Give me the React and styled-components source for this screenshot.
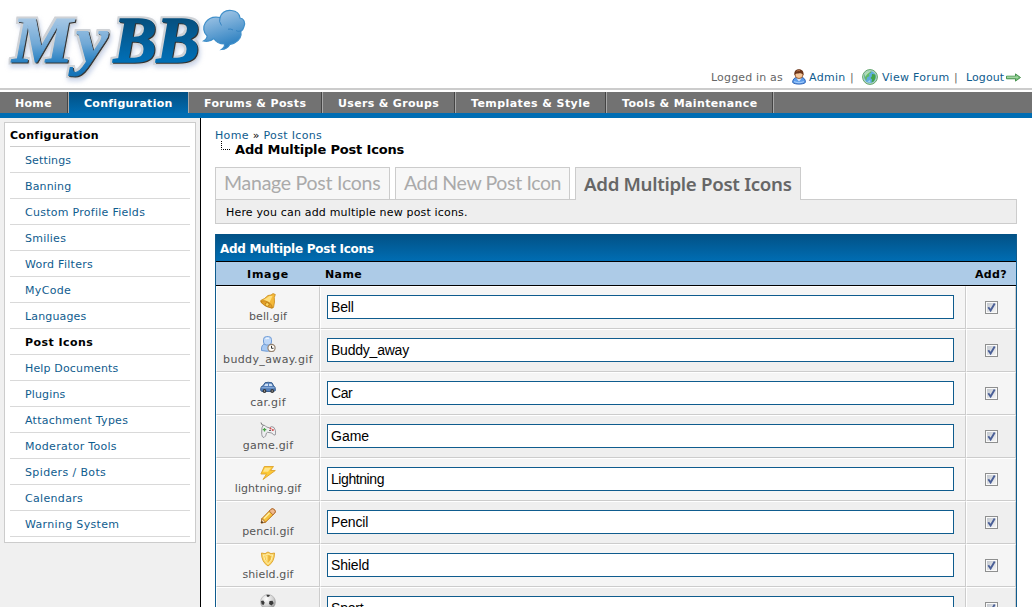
import React from "react";
import styled, { createGlobalStyle, css } from "styled-components";

const Global = createGlobalStyle`
  * { box-sizing: border-box; }
  html, body { margin: 0; padding: 0; background: #fff; overflow: hidden; }
  body { font: 11px/14px Verdana, "DejaVu Sans", sans-serif; color: #000; }
  ul { list-style: none; margin: 0; padding: 0; }
  a { color: #0f5c8e; text-decoration: none; }
`;

const Page = styled.div`
  height: 607px;
  display: flex;
  flex-direction: column;
  overflow: hidden;
`;

const Header = styled.header`
  height: 92px;
  flex: none;
  display: flex;
  justify-content: space-between;
  align-items: flex-end;
  padding: 0 11px 0 0;
  background: linear-gradient(#fff 88px, #ccc 88px, #ccc 90px, #fff 90px);
`;

const LogoArt = styled.svg`
  display: block;
  width: 260px;
  height: 88px;
  align-self: flex-start;
`;

const Welcome = styled.div`
  display: flex;
  align-items: center;
  height: 16px;
  margin-bottom: 7px;
  color: #666;
  white-space: pre;
`;

const WelcomeItem = styled.span`
  display: flex;
  align-items: center;
  line-height: 15px;
  padding-top: ${(p) => (p.$icon ? 0 : 1)}px;
  width: ${(p) => p.$w}px;
  letter-spacing: ${(p) => p.$ls || 0}px;
  gap: ${(p) => p.$gap || 0}px;
  svg { flex: none; }
  a { padding-top: 1px; }
`;

const Nav = styled.nav`
  display: flex;
  height: 26px;
  flex: none;
  background: linear-gradient(#727272 21px, #006db3 21px);
`;

const NavItem = styled.a`
  width: ${(p) => p.$w}px;
  height: 21px;
  line-height: 23px;
  padding-left: 15px;
  border-left: 1px solid #a8a8a8;
  border-right: 1px solid #444;
  color: #fff;
  font-weight: bold;
  white-space: nowrap;
  letter-spacing: ${(p) => p.$ls || 0}px;
  ${(p) => p.$first && css`border-left: 0;`}
  ${(p) => p.$active && css`
    border-right: 0;
    background: linear-gradient(#025083, #006bb0);
  `}
`;

const NavEnd = styled.span`
  width: 1px;
  height: 21px;
  background: #a8a8a8;
`;

const Body = styled.div`
  display: flex;
  flex: 1;
  min-height: 0;
`;

const Sidebar = styled.aside`
  width: 201px;
  flex: none;
  padding: 4px;
  background: #f0f0f0;
  border-right: 1px solid #000;
`;

const Menu = styled.div`
  background: #fff;
  border: 1px solid #ccc;
  padding: 0 5px 5px;
`;

const MenuTitle = styled.div`
  height: 24px;
  line-height: 25px;
  font-weight: bold;
  border-bottom: 1px solid #ccc;
  letter-spacing: 0.3px;
`;

const MenuItem = styled.li`
  height: 26px;
  line-height: 27px;
  padding-left: 15px;
  border-bottom: 1px solid #d9d9d9;
  color: ${(p) => (p.$active ? "#000" : "#0f5c8e")};
  font-weight: ${(p) => (p.$active ? "bold" : "normal")};
  letter-spacing: ${(p) => p.$ls || 0}px;
`;

const Content = styled.main`
  flex: 1;
  min-width: 0;
  padding: 11px 15px 0 14px;
`;

const Crumbs = styled.div`
  height: 14px;
  white-space: pre;
  letter-spacing: 0.33px;
`;

const CrumbTitle = styled.div`
  display: flex;
  gap: 5px;
  height: 14px;
  padding-left: 6px;
  font-size: 13px;
  line-height: 14px;
  font-weight: bold;
  letter-spacing: -0.17px;
`;

const CrumbBend = styled.svg`
  width: 9px;
  height: 9px;
  margin-top: -2px;
  flex: none;
  display: block;
`;

const Tabs = styled.div`
  display: flex;
  gap: 5px;
  margin-top: 10px;
`;

const Tab = styled.a`
  width: ${(p) => p.$w}px;
  height: ${(p) => (p.$active ? 33 : 32)}px;
  margin-bottom: ${(p) => (p.$active ? -1 : 0)}px;
  z-index: 1;
  padding-left: 8px;
  border: 1px solid #ccc;
  border-bottom: 0;
  background: ${(p) => (p.$active ? "#eee" : "#f7f7f7")};
  color: ${(p) => (p.$active ? "#666" : "#aaa")};
  font: ${(p) => (p.$active ? '600 18.7px/31px "Noto Sans"' : '400 19.5px/30px Lato')}, sans-serif;
  letter-spacing: ${(p) => p.$ls || 0}px;
  white-space: nowrap;
`;

const Intro = styled.div`
  height: 25px;
  line-height: 25px;
  padding-left: 10px;
  border: 1px solid #ccc;
  background: #eee;
  letter-spacing: 0.17px;
`;

const Panel = styled.section`
  margin-top: 10px;
  border: 1px solid #0f5c8e;
  height: 500px;
`;

const PanelTitle = styled.h2`
  margin: -1px 0 0;
  height: 28px;
  line-height: 30px;
  padding-left: 4px;
  font-size: 12px;
  color: #fff;
  background: linear-gradient(#025185, #006db3);
  border-bottom: 1px solid #000;
  letter-spacing: -0.26px;
`;

const grid = css`
  display: grid;
  grid-template-columns: 104px 646px 50px;
`;

const HeadRow = styled.div`
  ${grid}
  height: 24px;
  line-height: 25px;
  background: #adcbe7;
  border-bottom: 1px solid #000;
  font-weight: bold;
`;

const HeadCell = styled.span`
  text-align: ${(p) => (p.$left ? "left" : "center")};
  padding-left: ${(p) => (p.$left ? 5 : 0)}px;
  letter-spacing: ${(p) => p.$ls || 0}px;
`;

const Row = styled.div`
  ${grid}
  height: 43px;
  background: ${(p) => (p.$alt ? "#efefef" : "#f5f5f5")};
`;

const Cell = styled.div`
  display: flex;
  flex-direction: column;
  align-items: center;
  border: 1px solid;
  border-color: #fff #ccc #ccc #fff;
  padding: ${(p) => p.$pad || "0"};
  color: #555;
  svg { display: block; flex: none; }
`;

const FileName = styled.span`
  line-height: 15px;
  letter-spacing: ${(p) => p.$ls || 0}px;
`;

const Field = styled.input`
  width: 627px;
  height: 24px;
  padding: 1px 3px;
  margin-right: 5px;
  border: 1px solid #0f5c8e;
  border-radius: 0;
  background: #fff;
  color: #000;
  font: 14px "Liberation Sans", Arial, sans-serif;
  letter-spacing: ${(p) => p.$ls || 0}px;
  outline: none;
`;

/* ---------- drawings ---------- */

const Logo = () => (
  <LogoArt viewBox="0 0 260 88" role="img" aria-label="MyBB">
    <defs>
      <linearGradient id="lt" gradientUnits="userSpaceOnUse" x1="0" y1="17" x2="0" y2="76">
        <stop offset="0" stopColor="#a9c9e6" />
        <stop offset="0.45" stopColor="#72a9d6" />
        <stop offset="0.8" stopColor="#1f7cc0" />
        <stop offset="1" stopColor="#1472b6" />
      </linearGradient>
      <linearGradient id="dk" gradientUnits="userSpaceOnUse" x1="0" y1="19" x2="0" y2="63">
        <stop offset="0" stopColor="#06507f" />
        <stop offset="1" stopColor="#0070b8" />
      </linearGradient>
      <linearGradient id="bub" gradientUnits="userSpaceOnUse" x1="215" y1="10" x2="228" y2="50">
        <stop offset="0" stopColor="#a9cae8" />
        <stop offset="1" stopColor="#2079bd" />
      </linearGradient>
      <filter id="bevel" filterUnits="userSpaceOnUse" x="0" y="5" width="215" height="83" colorInterpolationFilters="sRGB">
        <feMorphology in="SourceAlpha" operator="dilate" radius="1.6" result="fat" />
        <feGaussianBlur in="fat" stdDeviation="0.6" result="fatSoft" />
        <feFlood floodColor="#cfd2d6" />
        <feComposite in2="fatSoft" operator="in" result="rim" />
        <feGaussianBlur in="fat" stdDeviation="2" />
        <feOffset dx="1" dy="3" result="far" />
        <feFlood floodColor="#9fb2d8" floodOpacity="0.5" />
        <feComposite in2="far" operator="in" result="glow" />
        <feGaussianBlur in="SourceAlpha" stdDeviation="0.4" />
        <feOffset dx="1" dy="1.2" result="near" />
        <feFlood floodColor="#333" />
        <feComposite in2="near" operator="in" result="edge" />
        <feMerge>
          <feMergeNode in="glow" />
          <feMergeNode in="rim" />
          <feMergeNode in="edge" />
          <feMergeNode in="SourceGraphic" />
        </feMerge>
      </filter>
    </defs>
    <g fontFamily='"Liberation Serif", serif' fontStyle="italic" fontWeight="bold" fontSize="66" filter="url(#bevel)">
      <text x="12" y="62" fill="url(#lt)" stroke="url(#lt)" strokeWidth="1" textLength="61" lengthAdjust="spacingAndGlyphs">M</text>
      <text x="76" y="62" fill="url(#lt)" stroke="url(#lt)" strokeWidth="1" textLength="32" lengthAdjust="spacingAndGlyphs">y</text>
      <text x="113.500" y="62" fill="url(#dk)" stroke="url(#dk)" strokeWidth="1.600" textLength="86" lengthAdjust="spacingAndGlyphs">BB</text>
    </g>
    <path
      d="M220 17.500C222 11.500 227 10 231.500 10.500C236.500 11 239.500 13.500 240 18C244 18.500 245.500 22.500 244 26.500C243.400 29 242 30.500 240.800 31.500C242 36 239.500 40.500 234.500 43C232 44.200 230.500 44 229.800 44.500C228.500 47 226.500 49.300 221.500 49.500C224.500 47.500 224.800 46 224.500 44C219 44 215.500 41.500 214 38.500C211.500 40.700 208 42 203.500 41C206.500 39 207.300 37.500 207 35.800C203.500 32.500 202.500 27 205.500 22.500C208.500 18 214.500 16.500 220 17.500Z"
      fill="url(#bub)" stroke="#3f8fca" strokeWidth="1.200"
    />
    <path d="M220 17.500Q218.500 21.500 221.500 25.500M228 29.200Q231 28.500 233 30M241 31Q237.500 32 236 30.500" fill="none" stroke="#3684c2" strokeWidth="1" />
  </LogoArt>
);

const UserIcon = () => (
  <svg width="14" height="16" viewBox="0 0 14 16">
    <path d="M.700 13.500C.300 10.500 3 8.500 4.500 8.300H9.500C11.500 8.500 13.900 10.500 13.300 13.500C11 15.600 3 15.600 .700 13.500Z" fill="#5b9bea" stroke="#2d62b5" />
    <path d="M4.500 9.500L7 12.500L9.500 9.500Z" fill="#d5e7fb" />
    <path d="M2 12.500Q7 14.800 12 12.500" stroke="#9cc8fb" strokeWidth="1.200" fill="none" />
    <circle cx="7" cy="5.500" r="4" fill="#f6c79b" stroke="#a0643b" />
    <path d="M2.600 6.500C1.500 1.800 4.500 .300 7 .300C10 .300 12.200 2.500 11.400 6.500C10.600 4.500 8.500 4.200 6.500 4.400C4.500 4.400 3.200 4.600 2.600 6.500Z" fill="#6b3419" />
    <path d="M4.500 2.200Q6 1.200 8 1.700" stroke="#b9744b" fill="none" />
  </svg>
);

const GlobeIcon = () => (
  <svg width="16" height="16" viewBox="0 0 16 16">
    <circle cx="8" cy="8" r="7.400" fill="#b7d6c4" stroke="#5fa56b" strokeWidth="1" />
    <circle cx="8" cy="8" r="5.900" fill="#5fabdf" />
    <path d="M2.500 6Q4 2 8.500 2L9.500 3.500L7 5L7.500 7L5 8.500L4.500 11.500Q2 9.500 2.500 6Z" fill="#62bb66" />
    <path d="M10 5L13.300 5.500Q14.300 9.500 11.500 12.500L9.500 13.500L10 10.500L8.500 9L9.800 7.500Z" fill="#43a648" />
    <path d="M3 4.500Q5.500 1.600 9 2.200Q6 4 3 8Z" fill="#fff" opacity=".5" />
    <path d="M5.500 12.500L8 11L8.500 13.800Z" fill="#9cd3f1" />
  </svg>
);

const ArrowIcon = () => (
  <svg width="15" height="9" viewBox="0 0 15 9">
    <path d="M.500 3.200H9.500V.900L14.500 4.500L9.500 8.100V5.800H.500Z" fill="#79c17c" stroke="#3d8b45" strokeWidth=".9" />
    <path d="M1 4.200H12" stroke="#b6e0b4" />
  </svg>
);

const icons = {
  bell: (
    <>
      <path d="M13 .600L15.300 1.500L14.300 4.500L14.500 9L13.500 14.500L11.500 15.200L1 9.500L.700 7.500L4.500 5.500L8 2.500L11 2Z" fill="#f4b93a" stroke="#c98a1c" strokeWidth=".8" />
      <path d="M3.500 7L9.500 3L12.500 3L9.500 9.500Z" fill="#ffdf7d" />
      <path d="M1 8Q5 6.800 9 9.500Q12.500 12 12.500 15Q8 14.800 4.500 12.500Q1 10 1 8Z" fill="#e3a029" stroke="#b67510" strokeWidth=".6" />
      <circle cx="7.200" cy="11.500" r="1.900" fill="#ffd75f" stroke="#a96a0a" strokeWidth=".7" />
    </>
  ),
  buddy: (
    <>
      <path d="M1.500 14.500Q1 8.500 5 8H10Q13.500 8.500 13 14.500Q7 16 1.500 14.500Z" fill="#a6c8f2" stroke="#6f9bd5" />
      <rect x="3.500" y=".600" width="8" height="8.400" rx="3" fill="#bcd6f7" stroke="#6f9bd5" />
      <path d="M5.500 3Q7 1.700 9 2.500" stroke="#e9f3ff" strokeWidth="1.500" fill="none" />
      <circle cx="11.500" cy="12" r="3.600" fill="#fffdf8" stroke="#93816f" strokeWidth="1.200" />
      <path d="M11.500 9.800V12.300H13.500" fill="none" stroke="#333" />
    </>
  ),
  car: (
    <>
      <path d="M.700 9.500Q1 7 3 6.800L5 3.700Q8 2.800 12 3.800L13.700 7Q15.600 7.500 15.400 11.500L13.500 12.500H2L.700 11.500Z" fill="#5680bb" stroke="#2f5688" strokeWidth=".9" />
      <path d="M4 7L5.500 4.700H8V7ZM9 4.700H11.500L12.500 7H9Z" fill="#cfe0f3" />
      <path d="M1.500 8.700H14.500" stroke="#8fb2dd" />
      <circle cx="4.500" cy="12" r="1.900" fill="#333" /><circle cx="12.200" cy="12" r="1.900" fill="#333" />
      <circle cx="4.500" cy="12" r=".7" fill="#bbb" /><circle cx="12.200" cy="12" r=".7" fill="#bbb" />
    </>
  ),
  game: (
    <>
      <path d="M1 .500Q1 3 4 3.500" stroke="#777" fill="none" />
      <path d="M3 3.500Q5 2.500 6.500 5L9.500 5.800Q11.500 3.500 14 5.500Q16 8 15.700 12.500Q14 14.500 11.800 11L9 10.500Q7 10 6.500 11Q6 14.500 4 15.500Q1.500 15.500 1.700 10Q1.500 5 3 3.500Z" fill="#eeeef0" stroke="#8d8d93" strokeWidth=".9" />
      <path d="M2.700 7.700H6.300M4.500 6V9.500" stroke="#47a447" strokeWidth="1.300" />
      <circle cx="10.500" cy="6.500" r="1" fill="#d84a4a" /><circle cx="12.800" cy="8" r="1.100" fill="#d84a4a" />
      <path d="M9 8.500H11" stroke="#666" />
    </>
  ),
  lightning: (
    <>
      <path d="M4.300 1.500H13.500L10.500 5.500H15.300L3 14.500L6.500 9H.900Z" fill="#fcc936" stroke="#dfa32b" strokeWidth=".9" strokeLinejoin="round" />
      <path d="M5 2.700H11L8 6.800H3Z" fill="#ffe48a" />
    </>
  ),
  pencil: (
    <>
      <path d="M11 1.300Q12.500 0 14.500 1.700Q16 3.500 14.800 5L5.500 14.200L1.200 15L2 10.500Z" fill="#f7c33c" stroke="#b96f17" strokeLinejoin="round" />
      <path d="M11 1.300Q12.500 0 14.500 1.700Q16 3.500 14.800 5L12.800 6.800L9.300 3Z" fill="#efb98f" stroke="#a8612c" strokeWidth=".8" />
      <path d="M2 10.500L5.500 14.200L1.200 15Z" fill="#fae0ba" stroke="#a5651c" strokeWidth=".8" />
      <path d="M4 10.500L9.500 5" stroke="#fff0a5" strokeWidth="1.600" /><circle cx="2" cy="14.200" r=".9" fill="#432" />
    </>
  ),
  shield: (
    <>
      <path d="M1.500 2L5 2.700L8 1L11 2.700L14.500 2Q14.500 11 8 15Q1.500 11 1.500 2Z" fill="#fbd768" stroke="#dfa530" strokeLinejoin="round" />
      <path d="M3.500 4L5.500 4.200L8 3L10.500 4.200L12.500 4Q12.200 9.500 8 12.800Q3.800 9.500 3.500 4Z" fill="#f5c340" stroke="#fff0b0" />
      <path d="M5.200 5L7.500 4.200V11Q5.500 9 5.200 5Z" fill="#ffe48b" />
      <path d="M8.500 4.200L10.800 5.200Q10.500 9 8.500 11Z" fill="#e9b13a" />
    </>
  ),
  sport: (
    <>
      <defs>
        <radialGradient id="ball" cx=".4" cy=".3" r=".75">
          <stop offset="0" stopColor="#fff" /><stop offset=".6" stopColor="#cfcfcf" /><stop offset="1" stopColor="#888" />
        </radialGradient>
      </defs>
      <circle cx="8" cy="8" r="7.500" fill="url(#ball)" stroke="#aaa" strokeWidth=".6" />
      <path d="M6.500 .800L10 1L9 2.800L7 2.700ZM1 7L3.300 6.500L4.700 8.700L3.500 11L1.600 10.300ZM9.500 7L12.500 6.700L13.700 9.200L11.500 11.500L9 10ZM6 13.500L8.500 13L9.500 15H6.500Z" fill="#3a3a3a" />
    </>
  ),
};

const Glyph = ({ name }) => (
  <svg width="16" height="16" viewBox="0 0 16 16">{icons[name]}</svg>
);

const Check = () => (
  <svg width="13" height="13" viewBox="0 0 13 13" role="checkbox" aria-checked="true">
    <defs>
      <linearGradient id="chk" x1="0" y1="0" x2="1" y2="1">
        <stop offset="0" stopColor="#c2c7ce" /><stop offset="1" stopColor="#f6f6f6" />
      </linearGradient>
    </defs>
    <rect x=".5" y=".5" width="12" height="12" fill="#fafafa" stroke="#8e8f8f" />
    <rect x="2" y="2" width="9" height="9" fill="url(#chk)" />
    <path d="M3.300 6.300L5.600 9.500L9.700 2.500" fill="none" stroke="#4a5f97" strokeWidth="1.900" />
  </svg>
);

/* ---------- data: label, (width,) letter spacing ---------- */

const nav = [
  ["Home", 68, 0.3],
  ["Configuration", 120, 0.28],
  ["Forums & Posts", 134, 0.37],
  ["Users & Groups", 133, 0.33],
  ["Templates & Style", 151, 0.42],
  ["Tools & Maintenance", 167, 0.37],
];

const menu = [
  ["Settings", 0.13], ["Banning", 0.15], ["Custom Profile Fields", 0.27], ["Smilies", 0.25], ["Word Filters", 0.27],
  ["MyCode", 0.33], ["Languages", 0.15], ["Post Icons", 0.45], ["Help Documents", 0.15], ["Plugins", 0.15],
  ["Attachment Types", 0.26], ["Moderator Tools", 0.3], ["Spiders / Bots", 0.37], ["Calendars", 0.33], ["Warning System", 0.33],
];

const rows = [
  ["bell", "bell.gif", "Bell", 0.1, -0.2],
  ["buddy", "buddy_away.gif", "Buddy_away", 0.37, -0.22],
  ["car", "car.gif", "Car", 0.27, -0.4],
  ["game", "game.gif", "Game", 0.25, 0],
  ["lightning", "lightning.gif", "Lightning", 0.05, -0.42],
  ["pencil", "pencil.gif", "Pencil", 0.12, -0.15],
  ["shield", "shield.gif", "Shield", 0.12, -0.15],
  ["sport", "sport.gif", "Sport", 0.1, -0.2],
];

export default function App() {
  return (
    <Page>
      <Global />
      <Header>
        <Logo />
        <Welcome>
          <WelcomeItem $w={81} $ls={0.17}>Logged in as</WelcomeItem>
          <WelcomeItem $w={58} $gap={3} $ls={0.3} $icon><UserIcon /><a href="#">Admin</a></WelcomeItem>
          <WelcomeItem $w={12}>|</WelcomeItem>
          <WelcomeItem $w={92} $gap={4} $ls={0.3} $icon><GlobeIcon /><a href="#">View Forum</a></WelcomeItem>
          <WelcomeItem $w={12}>|</WelcomeItem>
          <WelcomeItem $w={55} $gap={2} $ls={0.1} $icon><a href="#">Logout</a><ArrowIcon /></WelcomeItem>
        </Welcome>
      </Header>
      <Nav>
        {nav.map(([label, w, ls], i) => (
          <NavItem key={label} href="#" $w={w} $ls={ls} $first={i === 0} $active={i === 1}>{label}</NavItem>
        ))}
        <NavEnd />
      </Nav>
      <Body>
        <Sidebar>
          <Menu>
            <MenuTitle>Configuration</MenuTitle>
            <ul>
              {menu.map(([label, ls]) => (
                <MenuItem key={label} $ls={ls} $active={label === "Post Icons"}>{label}</MenuItem>
              ))}
            </ul>
          </Menu>
        </Sidebar>
        <Content>
          <Crumbs><a href="#">Home</a> » <a href="#">Post Icons</a></Crumbs>
          <CrumbTitle>
            <CrumbBend viewBox="0 0 9 9">
              <path d="M.5 0V8.500H9" fill="none" stroke="#000" strokeDasharray="1 1" />
            </CrumbBend>
            Add Multiple Post Icons
          </CrumbTitle>
          <Tabs>
            <Tab href="#" $w={175} $ls={-0.25}>Manage Post Icons</Tab>
            <Tab href="#" $w={175} $ls={-0.37}>Add New Post Icon</Tab>
            <Tab href="#" $w={226} $ls={-0.31} $active>Add Multiple Post Icons</Tab>
          </Tabs>
          <Intro>Here you can add multiple new post icons.</Intro>
          <Panel>
            <PanelTitle>Add Multiple Post Icons</PanelTitle>
            <HeadRow>
              <HeadCell $ls={0.7}>Image</HeadCell>
              <HeadCell $left $ls={0.4}>Name</HeadCell>
              <HeadCell $ls={0.4}>Add?</HeadCell>
            </HeadRow>
            {rows.map(([icon, file, name, ls, fieldLs], i) => (
              <Row key={file} $alt={i % 2 === 1}>
                <Cell $pad="6px 0 0">
                  <Glyph name={icon} />
                  {i < 7 && <FileName $ls={ls}>{file}</FileName>}
                </Cell>
                <Cell $pad="8px 0 0"><Field defaultValue={name} $ls={fieldLs} /></Cell>
                <Cell $pad="14px 0 0"><Check /></Cell>
              </Row>
            ))}
          </Panel>
        </Content>
      </Body>
    </Page>
  );
}
